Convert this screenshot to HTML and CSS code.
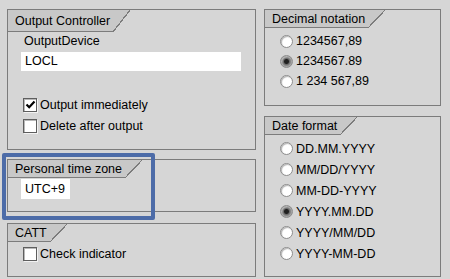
FILE: index.html
```html
<!DOCTYPE html>
<html lang="en">
<head>
    <meta charset="UTF-8">
    <title>User defaults</title>
    <link rel="stylesheet" href="styles.css">
</head>
<body>
    <div class="screen">
        <div class="col col-left">
            <div class="group g-output">
                <div class="tab tall"><span class="tab-label">Output Controller</span></div>
                <div class="field-label">OutputDevice</div>
                <div class="field wide">LOCL</div>
                <div class="checks">
                    <label class="row">
                        <span class="check">
                            <svg width="11" height="11" viewBox="0 0 11 11"><path d="M1.5 5.5 L4.2 8.2 L9.5 2.5" fill="none" stroke="#000" stroke-width="2.2"/></svg>
                        </span>
                        Output immediately
                    </label>
                    <label class="row"><span class="check"></span>Delete after output</label>
                </div>
            </div>

            <div class="group g-zone">
                <div class="tab"><span class="tab-label">Personal time zone</span></div>
                <div class="field short">UTC+9</div>
                <div class="highlight"></div>
            </div>

            <div class="group g-catt">
                <div class="tab"><span class="tab-label">CATT</span></div>
                <label class="row catt-row"><span class="check"></span>Check indicator</label>
            </div>
        </div>

        <div class="col col-right">
            <div class="group g-decimal">
                <div class="tab"><span class="tab-label">Decimal notation</span></div>
                <div class="radios">
                    <label class="row r20"><span class="radio"></span>1234567,89</label>
                    <label class="row r20"><span class="radio on"></span>1234567.89</label>
                    <label class="row r20"><span class="radio"></span>1 234 567,89</label>
                </div>
            </div>

            <div class="group g-date">
                <div class="tab"><span class="tab-label">Date format</span></div>
                <div class="radios">
                    <label class="row"><span class="radio"></span>DD.MM.YYYY</label>
                    <label class="row"><span class="radio"></span>MM/DD/YYYY</label>
                    <label class="row"><span class="radio"></span>MM-DD-YYYY</label>
                    <label class="row"><span class="radio on"></span>YYYY.MM.DD</label>
                    <label class="row"><span class="radio"></span>YYYY/MM/DD</label>
                    <label class="row"><span class="radio"></span>YYYY-MM-DD</label>
                </div>
            </div>
        </div>
    </div>
</body>
</html>
```

FILE: styles.css
```css
body{
    margin: 0;
    background-color: #d6d6d6;
    font-family: "Liberation Sans", Arial, sans-serif;
    font-size: 12.5px;
    color: #000;
}

.screen{
    display: flex;
    gap: 8px;
    padding: 9px 0 0 7px;
}

.col{
    display: flex;
    flex-direction: column;
}

.col-left{
    width: 249px;
}

.col-right{
    width: 177px;
}

.group{
    position: relative;
    box-sizing: border-box;
    border: 1px solid #7c7c7c;
}

.g-output{ height: 141px; margin-bottom: 9px; }
.g-zone{ height: 53px; margin-bottom: 11px; }
.g-catt{ height: 54px; }
.g-decimal{ height: 97px; margin-bottom: 10px; }
.g-date{ height: 161px; }

/* tab in the top left corner of a group */
.tab{
    display: flex;
    height: 18px;
}

.tab.tall{
    height: 22px;
}

.tab-label{
    box-sizing: border-box;
    display: flex;
    align-items: center;
    padding: 0 3px 0 7px;
    background-color: #c8c8c8;
    border-bottom: 1px solid #7c7c7c;
}

.tab::after{
    content: '';
    width: 17px;
    background: linear-gradient(to bottom right, #c8c8c8 calc(50% - 0.6px), #7c7c7c calc(50% - 0.6px), #7c7c7c calc(50% + 0.6px), transparent calc(50% + 0.6px));
}

.field-label{
    margin: 1px 0 0 16px;
    line-height: 16px;
}

.field{
    box-sizing: border-box;
    background-color: #fff;
    padding-left: 4px;
    margin-left: 13px;
}

.field.wide{
    width: 220px;
    height: 19px;
    line-height: 19px;
    margin-top: 3px;
}

.field.short{
    width: 49px;
    height: 20px;
    line-height: 20px;
    margin-top: 1px;
}

.checks{
    margin-top: 23px;
}

.row{
    display: flex;
    align-items: center;
    height: 21px;
    padding-left: 15px;
}

.row.r20{
    height: 20px;
}

.catt-row{
    margin-top: 1px;
}

.check{
    box-sizing: border-box;
    display: flex;
    align-items: center;
    justify-content: center;
    width: 14px;
    height: 14px;
    margin-right: 3px;
    background-color: #fff;
    border: 1px solid #5e5e5e;
    box-shadow: 1px 1px 0 #f2f2f2, inset 1px 1px 0 #b8b8b8;
}

.radios{
    margin-top: 3px;
}

.radio{
    box-sizing: border-box;
    width: 13px;
    height: 13px;
    margin-right: 3px;
    border-radius: 50%;
    background-color: #fff;
    border: 1px solid #8c8c8c;
    box-shadow: inset 1px 1px 1px #b4b4b4;
}

.radio.on{
    background: radial-gradient(circle, #202020 0 2px, #6a6a6a 3px, #a4a4a4 5px);
}

/* blue frame drawn over the time zone group */
.highlight{
    position: absolute;
    box-sizing: border-box;
    left: -6px;
    top: -7px;
    width: 153px;
    height: 67px;
    border: 4px solid #4d6ca8;
    border-radius: 2px;
}
```
